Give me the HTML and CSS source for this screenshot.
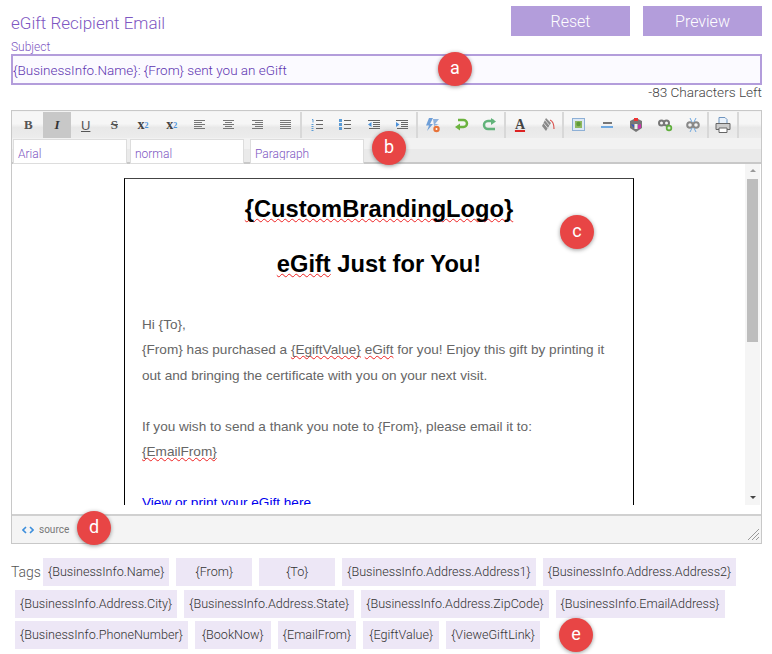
FILE: index.html
```html
<!DOCTYPE html>
<html lang="en">
<head>
    <meta charset="UTF-8">
    <meta name="viewport" content="width=device-width, initial-scale=1.0">
    <title>eGift Recipient Email</title>
    <link rel="stylesheet" href="styles.css">
</head>
<body>
    <div class="page">
        <div class="header">
            <h1 class="title">eGift Recipient Email</h1>
            <div class="actions">
                <button class="action-btn">Reset</button>
                <button class="action-btn">Preview</button>
            </div>
        </div>

        <label class="field-label" for="subject">Subject</label>
        <input class="subject-input" id="subject" type="text" value="{BusinessInfo.Name}: {From} sent you an eGift">
        <div class="char-count">-83 Characters Left</div>

        <div class="editor">
            <div class="toolbar-row">
                <span class="tool tool-text tool-b">B</span>
                <span class="tool tool-text tool-i active">I</span>
                <span class="tool tool-text tool-u">U</span>
                <span class="tool tool-text tool-s">S</span>
                <span class="tool tool-text tool-x">x<sub>2</sub></span>
                <span class="tool tool-text tool-x">x<sup>2</sup></span>
                <span class="tool"><svg width="16" height="16" viewBox="0 0 16 16"><path d="M2 3.500h11M2 5.500h8M2 7.500h11M2 9.500h8M2 11.500h11" stroke="#777" fill="none"/></svg></span>
                <span class="tool"><svg width="16" height="16" viewBox="0 0 16 16"><path d="M2 3.500h11M4 5.500h7M2 7.500h11M4 9.500h7M2 11.500h11" stroke="#777" fill="none"/></svg></span>
                <span class="tool"><svg width="16" height="16" viewBox="0 0 16 16"><path d="M2 3.500h11M5 5.500h8M2 7.500h11M5 9.500h8M2 11.500h11" stroke="#777" fill="none"/></svg></span>
                <span class="tool sep"><svg width="16" height="16" viewBox="0 0 16 16"><path d="M2 3.500h11M2 5.500h11M2 7.500h11M2 9.500h11M2 11.500h11" stroke="#777" fill="none"/></svg></span>
                <span class="tool"><svg width="16" height="16" viewBox="0 0 16 16"><path d="M7 3.500h7M7 7.500h7M7 11.500h7" stroke="#666" fill="none"/><path d="M3 2.500h1v3M2.500 7.500h2M2.500 9.500h2M2.500 11.500h2M2.500 13.500h2" stroke="#5b9bd5" fill="none"/></svg></span>
                <span class="tool"><svg width="16" height="16" viewBox="0 0 16 16"><path d="M7 3.500h7M7 7.500h7M7 11.500h7" stroke="#666" fill="none"/><path d="M2 2h3v3H2zM2 6h3v3H2zM2 10h3v3H2z" fill="#5b9bd5"/></svg></span>
                <span class="tool"><svg width="16" height="16" viewBox="0 0 16 16"><path d="M2 3.500h12M7 5.500h7M7 7.500h7M7 9.500h7M3 11.500h11" stroke="#666" fill="none"/><path d="M5.500 5v5L2 7.500z" fill="#4a90d9"/></svg></span>
                <span class="tool sep"><svg width="16" height="16" viewBox="0 0 16 16"><path d="M2 3.500h12M7 5.500h7M7 7.500h7M7 9.500h7M3 11.500h11" stroke="#666" fill="none"/><path d="M2 5v5l3.500-2.500z" fill="#4a90d9"/></svg></span>
                <span class="tool"><svg width="16" height="16" viewBox="0 0 16 16"><path d="M4 1h4L5 7h3l-6 7 2-5.500H1z" fill="#6f9fd8"/><path d="M8 2h6l-4 5h4l-5 2z" fill="#8fb2dd"/><circle cx="11.500" cy="12" r="3.200" fill="#e8743b"/><circle cx="11.500" cy="12" r="1" fill="#fff"/></svg></span>
                <span class="tool"><svg width="16" height="16" viewBox="0 0 16 16"><path d="M5 3h5.500a3.500 3.500 0 0 1 0 7H5" stroke="#6cb33f" stroke-width="2.500" fill="none"/><path d="M7 6.500v7L2 10z" fill="#6cb33f"/></svg></span>
                <span class="tool sep"><svg width="16" height="16" viewBox="0 0 16 16"><path d="M12 4H6a4 4 0 0 0 0 8h7" stroke="#62b37a" stroke-width="2.500" fill="none"/><path d="M9 1l5 3.500L9 8z" fill="#62b37a"/></svg></span>
                <span class="tool tool-text tool-color">A</span>
                <span class="tool sep"><svg width="16" height="16" viewBox="0 0 16 16"><path d="M6 1l5 5-5 8-4-5z" fill="#8a8a8a"/><path d="M5 3l5 6M3.500 6l5 6" stroke="#ddd" fill="none"/><path d="M10 3c3 1 4 4 4 9" stroke="#d9534f" stroke-width="1.200" fill="none"/></svg></span>
                <span class="tool"><svg width="16" height="16" viewBox="0 0 16 16"><rect x="1.500" y="1.500" width="12" height="12" fill="#dce8f5" stroke="#8eb0d6"/><rect x="4" y="4" width="7" height="7" fill="#8fb860"/><circle cx="7.500" cy="7" r="2.200" fill="#5d9a3a"/></svg></span>
                <span class="tool"><svg width="16" height="16" viewBox="0 0 16 16"><path d="M4 5h9v2H4z" fill="#777"/><path d="M2 9h12v2H2z" fill="#6fa8e0"/></svg></span>
                <span class="tool"><svg width="16" height="16" viewBox="0 0 16 16"><path d="M8 1l6 3v7l-6 4-6-4V4z" fill="#777"/><path d="M6 1h4v3H6z" fill="#e33"/><path d="M3 7l3 1v3z" fill="#35c"/><path d="M10 8l3-1v4l-3 1z" fill="#c3a"/><path d="M6.500 7h3v5h-3z" fill="#eee"/></svg></span>
                <span class="tool"><svg width="16" height="16" viewBox="0 0 16 16"><circle cx="4.500" cy="6" r="2.500" fill="none" stroke="#777" stroke-width="2"/><circle cx="9.500" cy="6" r="2.500" fill="none" stroke="#777" stroke-width="2"/><circle cx="12" cy="11" r="3.200" fill="#5fae3c"/><path d="M10.500 11h3M12 9.500v3" stroke="#fff"/></svg></span>
                <span class="tool sep"><svg width="16" height="16" viewBox="0 0 16 16"><circle cx="5" cy="8" r="2.800" fill="none" stroke="#888" stroke-width="2"/><circle cx="11" cy="8" r="2.800" fill="none" stroke="#888" stroke-width="2"/><path d="M5 1l2 4M11 1L9 5M5 15l2-4M11 15l-2-4" stroke="#6fa8e0" fill="none"/></svg></span>
                <span class="tool sep"><svg width="18" height="18" viewBox="0 0 18 18"><path d="M5 1.500h6l2 2v5H5z" fill="#eaf2fb" stroke="#6f95bf"/><path d="M2 7.500h14v6H2z" fill="#ccc" stroke="#666"/><path d="M5 12h8v4.500H5z" fill="#fff" stroke="#666"/></svg></span>
            </div>
            <div class="toolbar-row2">
                <div class="combo"><span>Arial</span></div>
                <div class="combo"><span>normal</span></div>
                <div class="combo"><span>Paragraph</span></div>
            </div>

            <div class="edit-area">
                <div class="edit-scroll">
                    <div class="doc">
                        <h2 class="doc-head"><span class="misspelt">{CustomBrandingLogo}</span></h2>
                        <h2 class="doc-head doc-head2"><span class="misspelt">eGift</span> Just for You!</h2>
                        <p class="doc-text">
                            Hi {To},<br>
                            {From} has purchased a <span class="misspelt">{EgiftValue}</span> <span class="misspelt">eGift</span> for you! Enjoy this gift by printing it out and bringing the certificate with you on your next visit.<br>
                            <br>
                            If you wish to send a thank you note to {From}, please email it to:<br>
                            <span class="misspelt">{EmailFrom}</span><br>
                            <br>
                            <a class="doc-link" href="#">View or print your eGift here</a>
                        </p>
                    </div>
                    <div class="scrollbar">
                        <span class="arrow-up"></span>
                        <span class="thumb"></span>
                        <span class="arrow-down"></span>
                    </div>
                </div>
            </div>

            <div class="editor-footer">
                <span class="source-link"><svg width="12" height="8" viewBox="0 0 12 8"><path d="M4 1L1 4l3 3M8 1l3 3-3 3" stroke="#3d8fdc" stroke-width="1.600" fill="none"/></svg> source</span>
                <svg class="grip" width="12" height="12" viewBox="0 0 12 12"><path d="M12 1L1 12M12 5l-7 7M12 9l-3 3" stroke="#999" fill="none"/></svg>
            </div>
        </div>

        <div class="tags">
            <span class="tags-label">Tags</span>
            <span class="tag">{BusinessInfo.Name}</span>
            <span class="tag">{From}</span>
            <span class="tag">{To}</span>
            <span class="tag">{BusinessInfo.Address.Address1}</span>
            <span class="tag">{BusinessInfo.Address.Address2}</span>
            <span class="tag">{BusinessInfo.Address.City}</span>
            <span class="tag">{BusinessInfo.Address.State}</span>
            <span class="tag">{BusinessInfo.Address.ZipCode}</span>
            <span class="tag">{BusinessInfo.EmailAddress}</span>
            <span class="tag">{BusinessInfo.PhoneNumber}</span>
            <span class="tag">{BookNow}</span>
            <span class="tag">{EmailFrom}</span>
            <span class="tag">{EgiftValue}</span>
            <span class="tag">{VieweGiftLink}</span>
        </div>

        <span class="marker marker-a">a</span>
        <span class="marker marker-b">b</span>
        <span class="marker marker-c">c</span>
        <span class="marker marker-d">d</span>
        <span class="marker marker-e">e</span>
    </div>
</body>
</html>
```

FILE: styles.css
```css
* {
    box-sizing: border-box;
}

body {
    margin: 0;
    font-family: Roboto, Arial, sans-serif;
    background: #fff;
}

.page {
    position: relative;
    width: 772px;
    height: 654px;
    padding: 6px 10px 0 11px;
    overflow: hidden;
}

.header {
    display: flex;
    justify-content: space-between;
    height: 30px;
}

.title {
    margin: 8px 0 0;
    font-size: 17px;
    line-height: 19px;
    font-weight: 300;
    color: #7e57c2;
}

.actions {
    display: flex;
    gap: 13px;
}

.action-btn {
    width: 119px;
    height: 30px;
    border: none;
    background: #b39ddb;
    color: #fff;
    font-family: Roboto, Arial, sans-serif;
    font-size: 16px;
    font-weight: 300;
}

.field-label {
    display: block;
    margin-top: 4px;
    font-size: 12px;
    line-height: 14px;
    font-weight: 300;
    color: #7e57c2;
}

.subject-input {
    display: block;
    width: 100%;
    height: 31px;
    padding: 0;
    border: 2px solid #b39ddb;
    outline: none;
    background: #fbfaff;
    color: #5e35b1;
    font-family: Roboto, Arial, sans-serif;
    font-size: 13.500px;
    font-weight: 300;
}

.char-count {
    height: 25px;
    text-align: right;
    font-size: 13.600px;
    line-height: 15px;
    font-weight: 300;
    color: #444;
}

.editor {
    height: 434px;
    border: 1px solid #c8c8c8;
    background: #f2f2f2;
}

.toolbar-row {
    display: flex;
    height: 26px;
    padding-left: 2px;
    margin-top: 1px;
    background: linear-gradient(#f6f6f6, #f6f6f6 45%, #e8e8e8 60%, #ececec);
}

.tool {
    display: flex;
    align-items: center;
    justify-content: center;
    width: 28.700px;
    height: 26px;
    color: #555;
}

.tool.sep {
    width: 30px;
    border-right: 2px solid #d8d8d8;
}

.tool.active {
    background: #c8c8c8;
}

.tool-text {
    font-family: "Liberation Serif", serif;
    font-size: 13px;
    font-weight: bold;
}

.tool-i {
    font-style: italic;
    color: #333;
}

.tool-u {
    font-family: "Liberation Sans", sans-serif;
    font-weight: normal;
    text-decoration: underline;
}

.tool-s {
    text-decoration: line-through;
}

.tool-x {
    color: #444;
    font-size: 14px;
}

.tool-x sub,
.tool-x sup {
    font-size: 8px;
    color: #4a90d9;
}

.tool-color {
    color: #444;
    font-size: 14px;
    text-decoration: underline #d22 2px;
}

.toolbar-row2 {
    display: flex;
    gap: 3px;
    height: 26px;
    padding: 1px 0 0 1px;
    border-bottom: 2px solid #c8c8c8;
    background: linear-gradient(#f2f2f2, #f2f2f2 45%, #eaeaea 45%);
}

.combo {
    width: 114px;
    height: 25px;
    padding: 7px 0 0 4px;
    border: 1px solid #ddd;
    background: #fff;
    color: #7e57c2;
    font-size: 12px;
    font-weight: 300;
}

.combo span {
    display: block;
    height: 13px;
    line-height: 14px;
    overflow: hidden;
}

.combo:last-child {
    margin-left: 3px;
}

.edit-area {
    height: 350px;
    background: #fff;
}

.edit-scroll {
    display: flex;
    height: 341px;
    overflow: hidden;
}

.doc {
    flex: none;
    width: 510px;
    height: 420px;
    margin: 14px 0 0 112px;
    padding: 0 17px;
    border: 1px solid #000;
    border-top-color: #444;
    font-family: "Liberation Sans", Arial, sans-serif;
}

.doc-head {
    margin: 16px 0 0;
    text-align: center;
    font-size: 23.700px;
    line-height: 29px;
    font-weight: bold;
    color: #000;
}

.doc-head2 {
    margin-top: 26px;
}

.doc-text {
    margin: 33px 0 0;
    font-size: 13.600px;
    line-height: 25.400px;
    color: #666;
}

.doc-link {
    color: #00e;
    text-decoration: none;
}

.misspelt {
    text-decoration: underline wavy #e22 1px;
    text-decoration-skip-ink: none;
}

.scrollbar {
    display: flex;
    flex-direction: column;
    align-items: center;
    width: 15px;
    height: 341px;
    margin-left: 111px;
    background: #f5f5f5;
}

.thumb {
    width: 11px;
    height: 163px;
    margin-top: 7px;
    background: #bdbdbd;
}

.arrow-up {
    width: 0;
    height: 0;
    margin-top: 5px;
    border: 3px solid transparent;
    border-top: none;
    border-bottom: 3px solid #999;
}

.arrow-down {
    width: 0;
    height: 0;
    margin-top: auto;
    margin-bottom: 6px;
    border: 3px solid transparent;
    border-bottom: none;
    border-top: 3px solid #444;
}

.editor-footer {
    display: flex;
    align-items: center;
    justify-content: space-between;
    height: 29px;
    padding: 0 2px 0 10px;
    border-top: 2px solid #d0d0d0;
    background: #f4f4f4;
}

.source-link {
    display: flex;
    align-items: center;
    gap: 5px;
    font-size: 10px;
    color: #777;
}

.grip {
    margin-top: 9px;
}

.tags {
    display: flex;
    flex-wrap: wrap;
    margin-top: 14px;
    font-size: 12.600px;
    font-weight: 300;
    color: #333;
}

.tags-label {
    width: 28px;
    line-height: 28px;
    font-size: 14px;
    color: #555;
}

.tag {
    min-width: 76px;
    height: 28px;
    margin: 0 3px 3.500px 4px;
    padding: 0 5px;
    background: #ede7f6;
    line-height: 28px;
    text-align: center;
}

.marker {
    position: absolute;
    width: 34px;
    height: 34px;
    border-radius: 50%;
    background: #e84545;
    box-shadow: 0 1px 4px rgba(0, 0, 0, 0.4);
    color: #fff;
    font-size: 18px;
    line-height: 32px;
    text-align: center;
}

.marker-a { left: 438px; top: 52px; }
.marker-b { left: 372px; top: 131px; }
.marker-c { left: 560px; top: 215px; }
.marker-d { left: 77px; top: 511px; }
.marker-e { left: 559px; top: 618px; }
```
